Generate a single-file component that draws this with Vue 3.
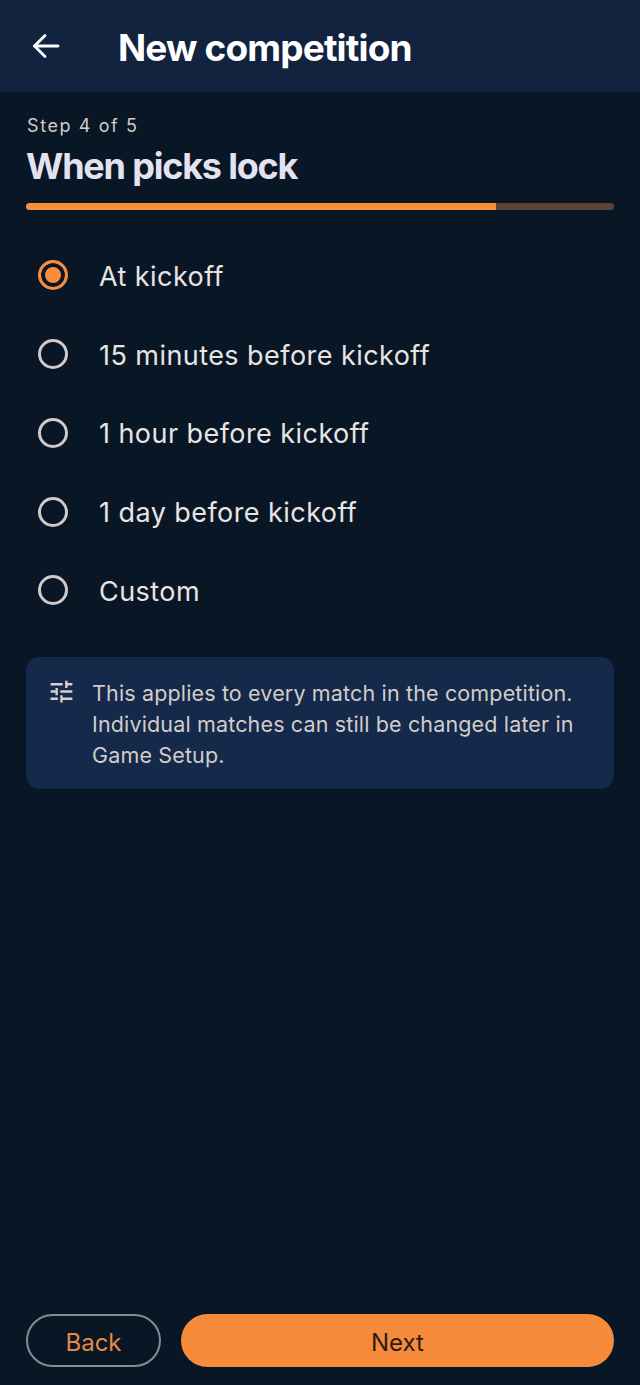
<script setup>
import { ref } from 'vue'

const options = ['At kickoff', '15 minutes before kickoff', '1 hour before kickoff', '1 day before kickoff', 'Custom']
const selected = ref(0)
const progress = 80
</script>

<template>
  <div class="screen">
    <header class="app-bar">
      <button class="back-icon" aria-label="Back">
        <svg width="30" height="30" viewBox="0 0 30 30" fill="none" stroke="#fff" stroke-width="2.8" stroke-linecap="round" stroke-linejoin="round">
          <path d="M3.5 15H27" />
          <path d="M14 4.5L3.5 15L14 25.5" />
        </svg>
      </button>
      <h1>New competition</h1>
    </header>

    <main class="content">
      <div class="step">Step 4 of 5</div>
      <h2>When picks lock</h2>
      <div class="track">
        <div class="fill" :style="{ width: progress + '%' }"></div>
      </div>

      <div class="options">
        <div
          v-for="(opt, i) in options"
          :key="opt"
          class="option"
          @click="selected = i"
        >
          <span class="radio" :class="{ on: selected === i }"></span>
          <span class="label">{{ opt }}</span>
        </div>
      </div>

      <div class="note">
        <svg class="tune" width="24" height="24" viewBox="0 0 24 24" fill="#d6cfcc">
          <path d="M3 17v2h6v-2H3zM3 5v2h10V5H3zm10 16v-2h8v-2h-8v-2h-2v6h2zM7 9v2H3v2h4v2h2V9H7zm14 4v-2H11v2h10zm-6-4h2V7h4V5h-4V3h-2v6z" />
        </svg>
        <p>This applies to every match in the competition. Individual matches can still be changed later in Game Setup.</p>
      </div>
    </main>

    <footer class="actions">
      <button class="btn back">Back</button>
      <button class="btn next">Next</button>
    </footer>
  </div>
</template>

<style>
html, body {
  margin: 0;
  background: #081625;
}
</style>

<style scoped>
.screen {
  width: 640px;
  height: 1385px;
  display: flex;
  flex-direction: column;
  background: #081625;
  font-family: Inter, "Liberation Sans", sans-serif;
  overflow: hidden;
}

.app-bar {
  height: 92px;
  flex-shrink: 0;
  display: flex;
  align-items: center;
  gap: 57px;
  padding: 0 0 0 30px;
  background: #122340;
}

.back-icon {
  width: 31px;
  height: 30px;
  padding: 0;
  border: none;
  background: none;
  margin-top: 0;
}

h1 {
  margin: 2px 0 0;
  font-size: 37px;
  font-weight: 700;
  letter-spacing: -0.85px;
  color: #fff;
}

.content {
  flex: 1;
  padding: 0 26px;
}

.step {
  margin-top: 23px;
  padding-left: 1px;
  font-size: 18px;
  line-height: 22px;
  letter-spacing: 1.6px;
  color: #d3ccc9;
}

h2 {
  margin: 7px 0 0;
  font-size: 36px;
  line-height: 44px;
  font-weight: 700;
  letter-spacing: -1.2px;
  color: #e5e2ef;
}

.track {
  height: 7px;
  margin-top: 15px;
  border-radius: 4px;
  background: #5e4234;
  overflow: hidden;
}

.fill {
  height: 100%;
  background: #fb8d39;
}

.options {
  margin-top: 26px;
  display: flex;
  flex-direction: column;
}

.option {
  height: 78.75px;
  display: flex;
  align-items: center;
  gap: 31px;
  padding-left: 12px;
}

.radio {
  width: 30px;
  height: 30px;
  box-sizing: border-box;
  flex-shrink: 0;
  border: 3px solid #d3c9c6;
  border-radius: 50%;
}

.radio.on {
  border-color: #f98d3c;
  background: #f98d3c;
  box-shadow: inset 0 0 0 4px #081625;
}

.label {
  position: relative;
  top: 1px;
  font-size: 27px;
  letter-spacing: 0.44px;
  color: #e9e4e2;
}

.note {
  margin-top: 27px;
  height: 132px;
  box-sizing: border-box;
  display: flex;
  gap: 16px;
  padding: 21px 20px 0 21px;
  border-radius: 14px;
  background: #15294a;
}

.tune {
  flex-shrink: 0;
  margin-top: -1px;
  width: 29px;
  height: 29px;
}

p {
  margin: 0;
  font-size: 21.5px;
  line-height: 31px;
  letter-spacing: 0.15px;
  color: #d3ccc9;
}

.actions {
  display: flex;
  gap: 20px;
  padding: 0 26px 18px;
}

.btn {
  height: 53px;
  box-sizing: border-box;
  padding-top: 4px;
  border-radius: 27px;
  font-family: inherit;
  font-size: 24px;
}

.btn.back {
  width: 135px;
  border: 2px solid #8b8b8f;
  background: none;
  color: #e58a44;
}

.btn.next {
  flex: 1;
  border: none;
  background: #f58b3b;
  color: #2a1d14;
}
</style>
